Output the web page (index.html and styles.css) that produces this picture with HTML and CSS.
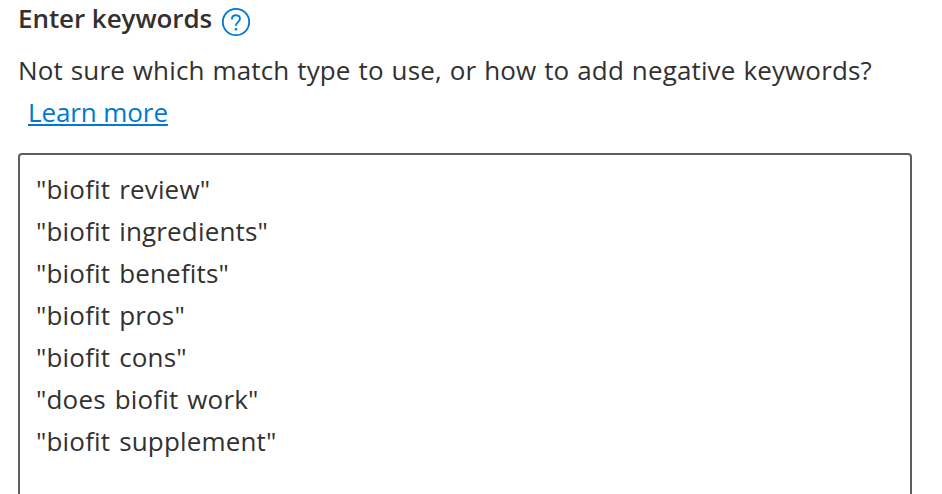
FILE: index.html
```html
<!DOCTYPE html>
<html lang="en">
<head>
<meta charset="utf-8">
<title>Enter keywords</title>
<link rel="stylesheet" href="styles.css">
</head>
<body>
<main class="panel">
  <h1 class="heading">Enter keywords
    <svg class="help" viewBox="0 0 30 30" aria-label="Help"><circle cx="15" cy="15" r="13.2"/><path d="M11 12.4V11.4C11.4 7.2 19 7.2 19 11.6C19 14.8 15 15 15 18.8"/><circle class="dot" cx="15" cy="22.2" r="1.3"/></svg>
  </h1>
  <p class="hint">Not sure which match type to use, or how to add negative keywords?</p>
  <p class="more"><a class="link" href="#">Learn more</a></p>
  <div class="box">
    <div class="line">"biofit review"</div>
    <div class="line">"biofit ingredients"</div>
    <div class="line">"biofit benefits"</div>
    <div class="line">"biofit pros"</div>
    <div class="line">"biofit cons"</div>
    <div class="line">"does biofit work"</div>
    <div class="line">"biofit supplement"</div>
  </div>
</main>
</body>
</html>
```
FILE: styles.css
```css
* { box-sizing: border-box; }
body { margin: 0; height: 494px; overflow: hidden; background: #fff; color: #323130; font: 26px/42px "Segoe UI", "Open Sans", "Noto Sans", sans-serif; }
.panel { padding: 0 30px 0 18px; }
.heading { display: flex; align-items: center; gap: 9px; height: 49px; margin: 0; padding-bottom: 13px; font-size: 26px; font-weight: 600; letter-spacing: -0.07px; white-space: nowrap; }
.help { width: 30px; height: 30px; margin-top: 8px; fill: none; stroke: #0078d4; stroke-width: 1.8; }
.help .dot { fill: #0078d4; stroke: none; }
.hint, .more { height: 42px; margin: 0; white-space: nowrap; }
.hint { letter-spacing: 0.14px; word-spacing: 1px; }
.more { padding-left: 10px; letter-spacing: -0.1px; }
.link { color: #0078d4; text-decoration-thickness: 2px; text-underline-offset: 2px; }
.box { height: 360px; margin-top: 20px; padding: 13px 16px; border: 2px solid #605e5c; border-radius: 4px; }
.line { height: 42px; letter-spacing: 0.17px; word-spacing: 2px; white-space: nowrap; }
```
